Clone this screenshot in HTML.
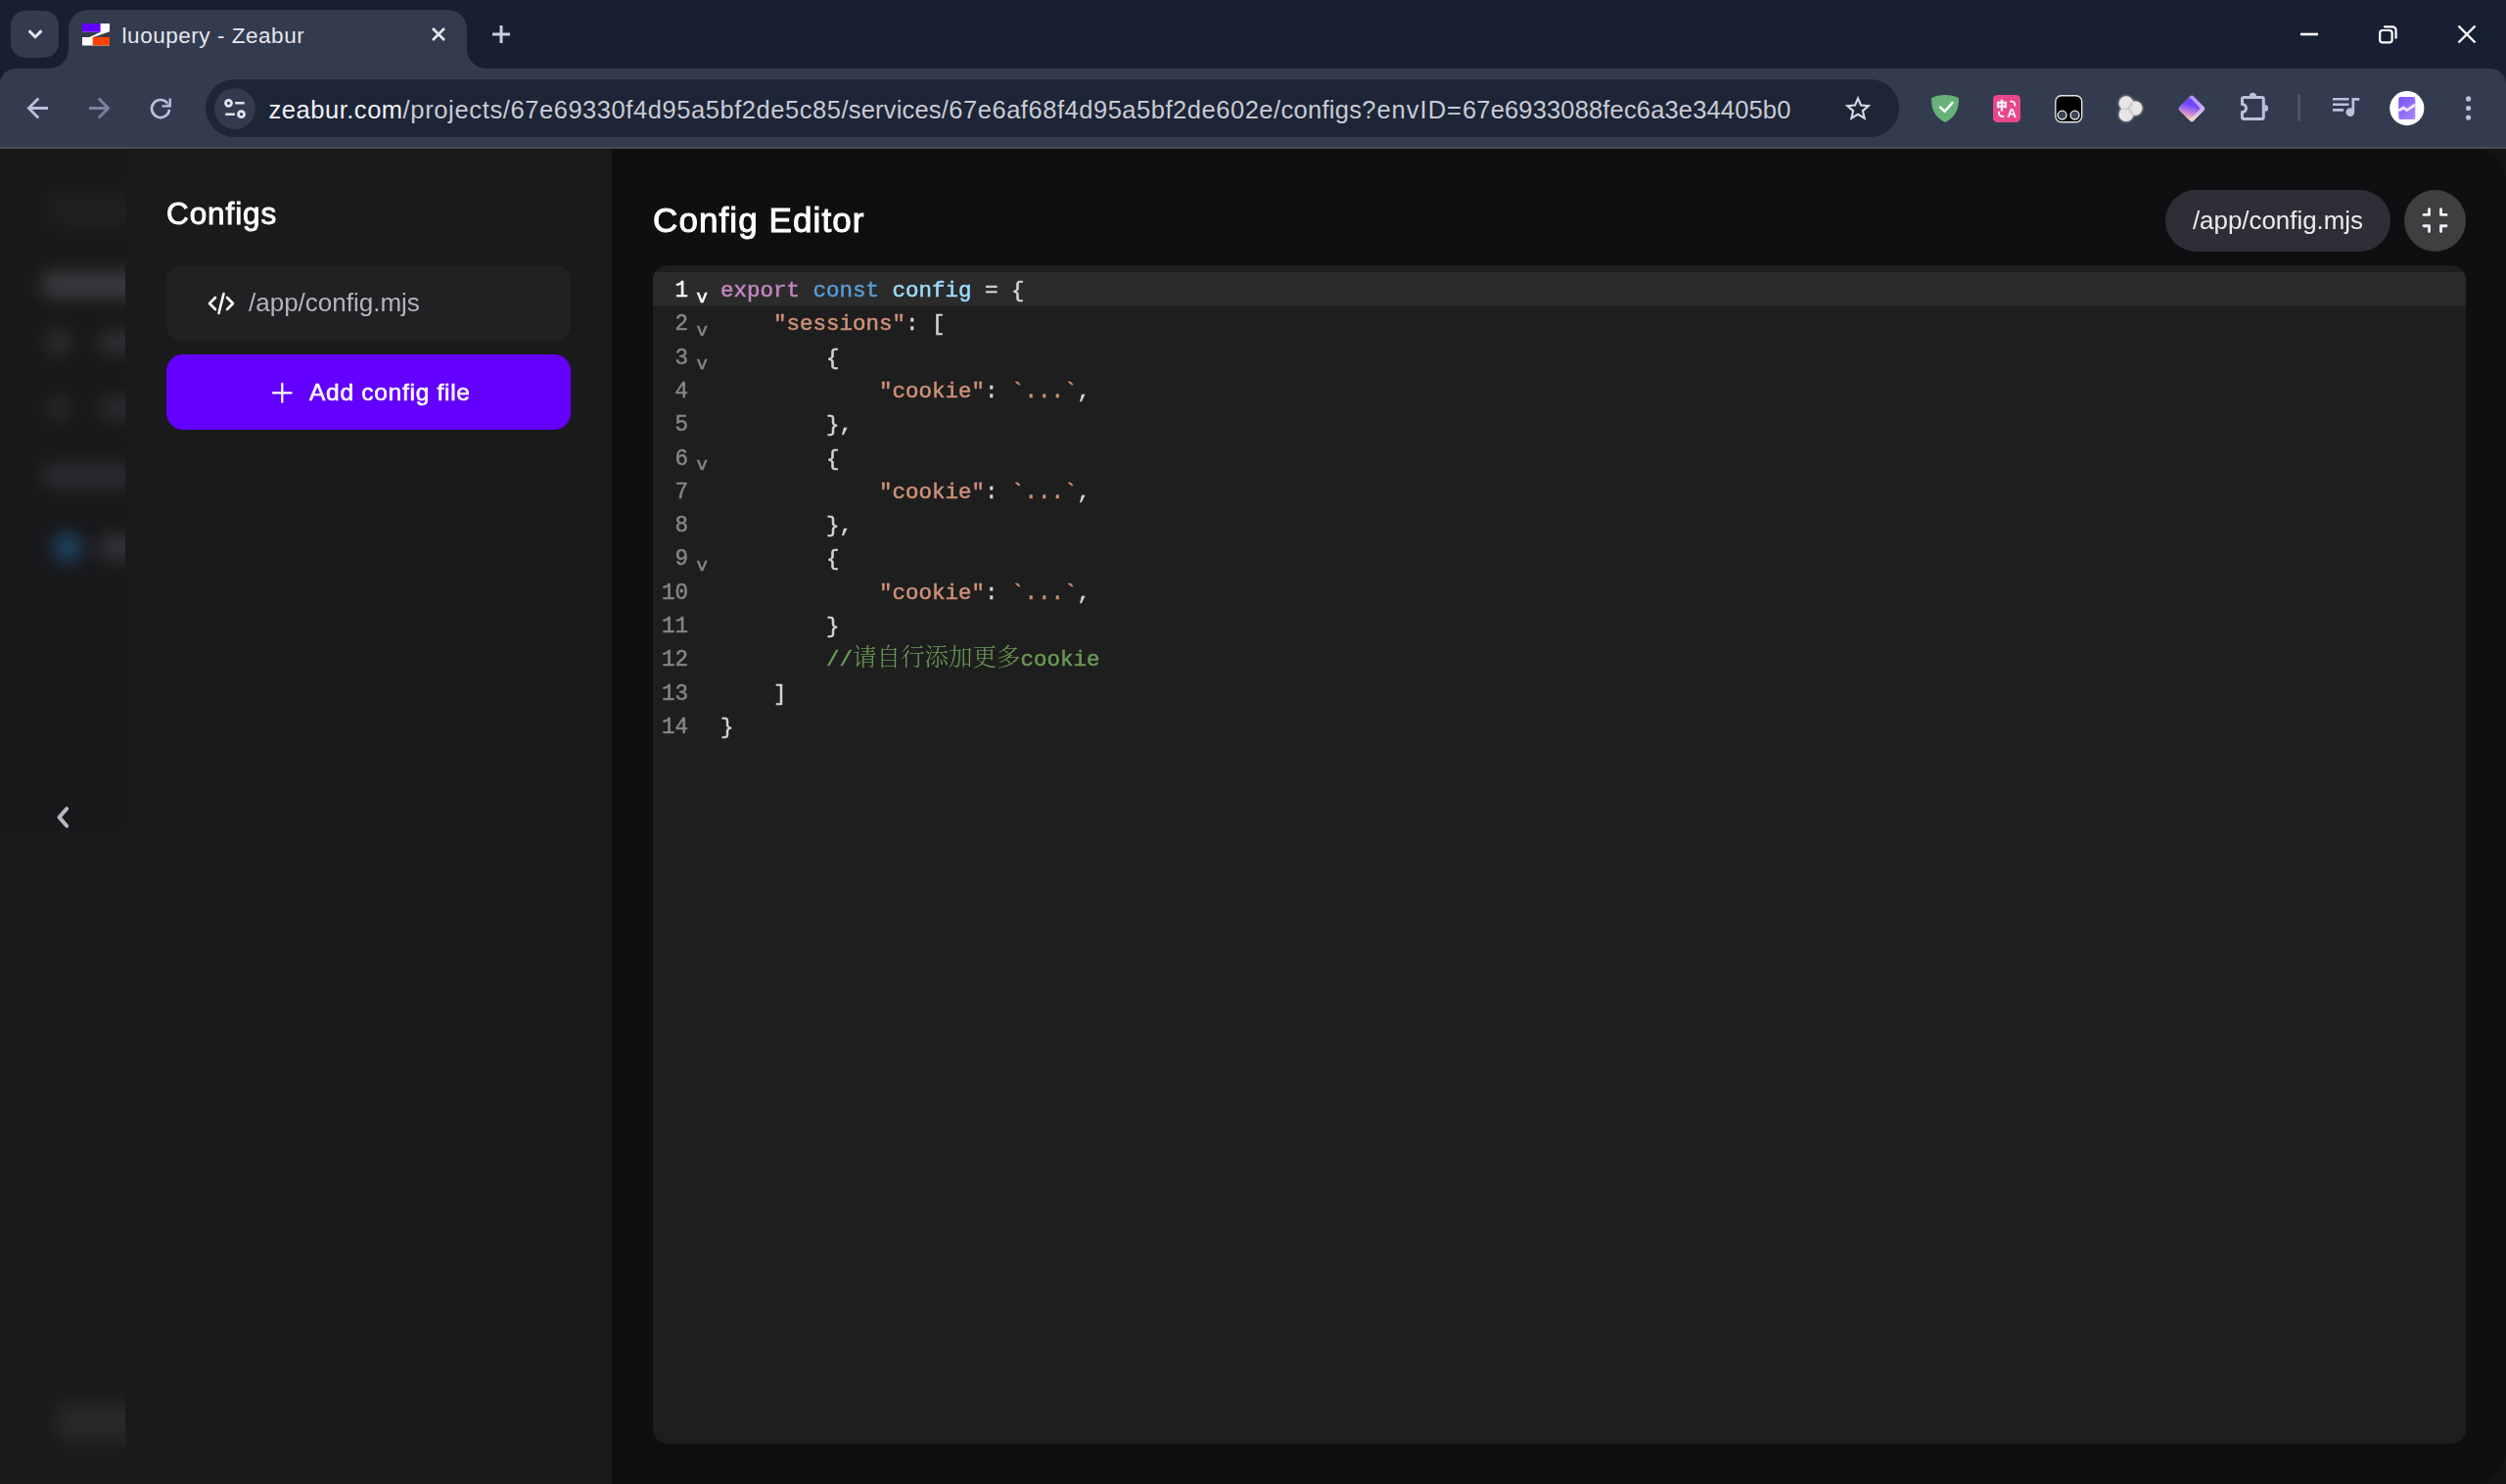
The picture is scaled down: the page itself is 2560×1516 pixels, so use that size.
<!DOCTYPE html>
<html lang="en">
<head>
<meta charset="utf-8">
<title>luoupery - Zeabur</title>
<style>
*{box-sizing:border-box;margin:0;padding:0}
html,body{width:2560px;height:1516px;overflow:hidden;background:#131315;}
body{position:relative;font-family:"Liberation Sans",sans-serif;color:#fff;-webkit-font-smoothing:antialiased}
.abs{position:absolute}
svg{display:block;overflow:visible}

/* ---------- browser chrome ---------- */
#tabstrip{position:absolute;left:0;top:0;width:2560px;height:152px;background:#172032}
#tabsearch{position:absolute;left:11px;top:11px;width:49px;height:48px;border-radius:15px;background:#333c4e}
#tab{position:absolute;left:70px;top:10px;width:406.5px;height:62px;background:#333c4e;border-radius:20px 20px 0 0}
#tab:before,#tab:after{content:"";position:absolute;bottom:2px;width:20px;height:20px}
#tab:before{left:-20px;background:radial-gradient(circle at 0 0,rgba(0,0,0,0) 19.5px,#333c4e 20.5px)}
#tab:after{right:-20px;background:radial-gradient(circle at 100% 0,rgba(0,0,0,0) 19.5px,#333c4e 20.5px)}
#tabtitle{position:absolute;left:124.6px;top:22px;font-size:22.5px;line-height:30px;color:#e4e6ee;white-space:nowrap;letter-spacing:0.53px}
#toolbar{position:absolute;left:0;top:70px;width:2560px;height:81px;background:#333c4e;border-radius:16px 16px 0 0}
#tbline{position:absolute;left:0;top:150px;width:2560px;height:2px;background:#474b55}
#urlbox{position:absolute;left:210px;top:81px;width:1730px;height:59px;border-radius:30px;background:#1d2537}
#siteinfo{position:absolute;left:219px;top:90px;width:42px;height:42px;border-radius:21px;background:#333c4e}
#url{position:absolute;left:274px;top:92.5px;width:1600px;height:38px;font-size:25.5px;line-height:38px;color:#c9cbd3;white-space:nowrap}
#url span{position:absolute;top:0}#url .dom{color:#f1f2f6}

/* ---------- page ---------- */
#page{position:absolute;left:0;top:152px;width:2560px;height:1364px;background:#131315;overflow:hidden}
#rail{position:absolute;left:0;top:0;width:128px;height:1364px;background:#1a1a1c;overflow:hidden}
#railblur{position:absolute;left:-40px;top:-40px;width:248px;height:1444px;background:linear-gradient(#18181a,#18181a) 0 0/248px 741px no-repeat,#1a1a1c;filter:blur(9px)}
.bl{position:absolute}
#panel{position:absolute;left:128px;top:0;width:497px;height:1364px;background:#1a1a1c}
#main{position:absolute;left:625px;top:0;width:1935px;height:1364px;background:#0f0f11;border-radius:0 34px 34px 0}

#h-configs,#h-editor,#cfgitem .t,#addbtn .t,#chip .t{will-change:transform}
/* rail */
#chev{position:absolute;left:53px;top:670px}
/* panel */
#h-configs{position:absolute;left:170px;top:46px;font-size:31.5px;line-height:40px;font-weight:400;-webkit-text-stroke:0.9px #fff;letter-spacing:0.9px;color:#fff;white-space:nowrap}
#cfgitem{position:absolute;left:170px;top:119px;width:413px;height:77px;border-radius:15px;background:#212123}
#cfgitem .ic{position:absolute;left:42px;top:26px}
#cfgitem .t{position:absolute;left:84px;top:21px;font-size:26px;line-height:34px;color:#b4b4bc;white-space:nowrap}
#addbtn{position:absolute;left:170px;top:210px;width:413px;height:77px;border-radius:17px;background:#6300ff}
#addbtn .ic{position:absolute;left:108px;top:29px}
#addbtn .t{position:absolute;left:146px;top:22px;font-size:24.5px;line-height:34px;font-weight:400;-webkit-text-stroke:0.6px #fff;letter-spacing:0.72px;color:#fff;white-space:nowrap}
/* main */
#h-editor{position:absolute;left:667px;top:51px;font-size:35px;line-height:44px;font-weight:400;-webkit-text-stroke:1px #fff;letter-spacing:1.1px;color:#fff;white-space:nowrap}
#chip{position:absolute;left:2212px;top:42px;width:230px;height:63px;border-radius:32px;background:#2f2e37}
#chip .t{position:absolute;left:0;top:14px;width:230px;text-align:center;font-size:25.9px;line-height:34px;color:#ececf0;white-space:nowrap}
#shrink{position:absolute;left:2456px;top:42px;width:63px;height:63px;border-radius:32px;background:#3f3f41}
#editor{position:absolute;left:667px;top:119px;width:1852px;height:1204px;border-radius:15px;background:#1e1e1e;overflow:hidden}
#activeline{position:absolute;left:0;top:7px;width:1852px;height:34.3px;background:#2b2b2b}
#code{position:absolute;left:0;top:8.9px;will-change:transform;-webkit-text-stroke-width:0.5px;width:1852px;font-family:"Liberation Mono","Noto Serif CJK SC",monospace;font-size:22.5px;line-height:34.3px;color:#d4d4d4;white-space:pre}
.ln{position:absolute;left:0;width:36px;text-align:right;color:#858585;transform:translateY(0.6px) scaleY(1.08);transform-origin:50% 72%}
.ln.act{color:#fff}.fold.act{color:#fff}
.fold{position:absolute;left:44.5px;color:#858585;font-size:19px;margin-top:1.8px;-webkit-text-stroke-width:0.6px}
.cl{position:absolute;left:69px}
.zh{font-size:24.5px;font-weight:300;-webkit-text-stroke-width:0;line-height:30px}.k1{color:#c586c0}.k2{color:#569cd6}.v{color:#9cdcfe}.s{color:#ce9178}.c{color:#6a9955}
</style>
</head>
<body>

<div id="tabstrip">
  <div id="tabsearch"></div>
  <div id="tab"></div>
  <div id="tabtitle">luoupery - Zeabur</div>
  <div id="toolbar"></div>
  <div id="urlbox"></div>
  <div id="siteinfo"></div>
  <div id="url"><span class="dom" style="left:0.6px;letter-spacing:0.517px">zeabur.com</span><span style="left:137.6px;letter-spacing:0.647px">/projects</span><span style="left:239.8px;letter-spacing:0.555px">/67e69330f4d95a5bf2de5c85</span><span style="left:585.5px;letter-spacing:0.177px">/services</span><span style="left:687.7px;letter-spacing:0.529px">/67e6af68f4d95a5bf2de602e</span><span style="left:1027.1px;letter-spacing:0.276px">/configs</span><span style="left:1117.2px;letter-spacing:1.016px">?envID=</span><span style="left:1220.0px;letter-spacing:0.152px">67e6933088fec6a3e34405b0</span></div>

  <!-- tab search chevron -->
  <svg class="abs" style="left:27px;top:27px" width="18" height="16" viewBox="0 0 18 16"><path d="M2.6 4.4 L9 10.8 L15.4 4.4" fill="none" stroke="#e1e3ec" stroke-width="2.9" stroke-linecap="butt" stroke-linejoin="miter"/></svg>
  <!-- favicon -->
  <svg class="abs" style="left:84px;top:23.7px" width="28" height="22.4" viewBox="0 0 28 22.4">
    <path d="M0 0 H28 V8.3 L11.5 14 H28 V22.4 H0 V13.9 H7.4 L18.6 8.7 H0 Z" fill="#fff"/>
    <rect x="0" y="0" width="18.6" height="8.7" fill="#6300ff"/>
    <rect x="10.7" y="13.9" width="17.3" height="8.5" fill="#ff4400"/>
  </svg>
  <!-- tab close -->
  <svg class="abs" style="left:441px;top:28px" width="14" height="14" viewBox="0 0 14 14"><path d="M1 1 L13 13 M13 1 L1 13" fill="none" stroke="#e4e6ee" stroke-width="2.6"/></svg>
  <!-- new tab -->
  <svg class="abs" style="left:503px;top:26px" width="18" height="18" viewBox="0 0 18 18"><path d="M9 0 V18 M0 9 H18" fill="none" stroke="#c9cde2" stroke-width="3"/></svg>
  <!-- window controls -->
  <svg class="abs" style="left:2350px;top:33px" width="18" height="4" viewBox="0 0 18 4"><path d="M0 2 H18" stroke="#fff" stroke-width="2.6"/></svg>
  <svg class="abs" style="left:2430px;top:26px" width="19" height="19" viewBox="0 0 19 19"><rect x="1.2" y="5" width="12.4" height="12.4" rx="2.6" fill="none" stroke="#fff" stroke-width="2.2"/><path d="M5.2 1.3 H14 A3.6 3.6 0 0 1 17.6 4.9 V13.6" fill="none" stroke="#fff" stroke-width="2.2"/></svg>
  <svg class="abs" style="left:2511px;top:26px" width="18" height="18" viewBox="0 0 18 18"><path d="M0.5 0.5 L17.5 17.5 M17.5 0.5 L0.5 17.5" fill="none" stroke="#fff" stroke-width="2.4"/></svg>

  <!-- nav -->
  <svg class="abs" style="left:27px;top:99px" width="24" height="23" viewBox="0 0 24 23"><path d="M22 11.5 H2.5 M12.3 1.6 L2.4 11.5 L12.3 21.4" fill="none" stroke="#b9c1dd" stroke-width="2.8" stroke-linejoin="miter"/></svg>
  <svg class="abs" style="left:89px;top:99px" width="24" height="23" viewBox="0 0 24 23"><path d="M2 11.5 H21.5 M11.7 1.6 L21.6 11.5 L11.7 21.4" fill="none" stroke="#7b839a" stroke-width="2.8" stroke-linejoin="miter"/></svg>
  <svg class="abs" style="left:152.4px;top:98.6px" width="24" height="24" viewBox="0 0 24 24"><path d="M20.97 12.78 A9 9 0 1 1 19.2 6.6" fill="none" stroke="#b9c1dd" stroke-width="2.7"/><path d="M21.75 1.4 V9.35 H13.5" fill="none" stroke="#b9c1dd" stroke-width="2.3"/><path d="M21.75 9.35 V5.2 L17.2 9.35 Z" fill="#b9c1dd" fill-opacity=".75"/></svg>
  <!-- site info -->
  <svg class="abs" style="left:227px;top:98px" width="26" height="26" viewBox="0 0 26 26"><circle cx="6.5" cy="7.3" r="3.0" fill="none" stroke="#e1e3ec" stroke-width="2.8"/><path d="M13.1 7.2 H22.7 M3.2 18.8 H12.9" stroke="#e1e3ec" stroke-width="2.5" fill="none"/><circle cx="19.5" cy="18.7" r="3.0" fill="none" stroke="#e1e3ec" stroke-width="2.8"/></svg>
  <!-- star -->
  <svg class="abs" style="left:1882px;top:95px" width="32" height="32" viewBox="0 0 24 24"><path fill="#d5d7e0" d="M22 9.24l-7.19-.62L12 2 9.19 8.63 2 9.24l5.46 4.73L5.82 21 12 17.27 18.18 21l-1.63-7.03L22 9.24zM12 15.4l-3.76 2.27 1-4.28-3.32-2.88 4.38-.38L12 6.1l1.71 4.04 4.38.38-3.32 2.88 1 4.28L12 15.4z"/></svg>
  <!-- adguard -->
  <svg class="abs" style="left:1973px;top:97px" width="28" height="28" viewBox="0 0 28 28"><path d="M14 0 C9 0 4 1.2 0 3.2 C0 12 1.5 21.5 14 28 C26.5 21.5 28 12 28 3.2 C24 1.2 19 0 14 0 Z" fill="#67b279"/><path d="M8.3 11.9 L13.6 16.7 L22.2 7.1" fill="none" stroke="#fff" stroke-width="2.4"/></svg>
  <!-- translate -->
  <div class="abs" style="left:2036px;top:97px;width:28px;height:28px;border-radius:4.5px;background:#e9478b"></div>
  <div class="abs" style="left:2039.6px;top:101px;font-family:'Liberation Sans','Noto Sans CJK SC',sans-serif;font-size:11px;line-height:14px;font-weight:700;-webkit-text-stroke:0.5px #fff;color:#fff">中</div>
  <div class="abs" style="left:2050.2px;top:108.6px;font-size:13.5px;line-height:14px;font-weight:700;color:#fff">A</div>
  <svg class="abs" style="left:2036px;top:97px" width="28" height="28" viewBox="0 0 28 28"><path d="M17.2 6.6 H19 A3.4 3.4 0 0 1 22.4 10 V11.6" fill="none" stroke="#fff" stroke-width="1.8"/><path d="M11.2 21.8 H9.4 A3.4 3.4 0 0 1 6 18.4 V16.8" fill="none" stroke="#fff" stroke-width="1.8"/></svg>
  <!-- tampermonkey -->
  <svg class="abs" style="left:2098.8px;top:96.5px" width="28.5" height="28.5" viewBox="0 0 29 29"><rect x="0.8" y="0.8" width="27.4" height="27.4" rx="6" fill="#000" stroke="#e6e6e6" stroke-width="1.4"/><circle cx="7.7" cy="20.9" r="4.5" fill="#3a4256" stroke="#ececec" stroke-width="1.4"/><circle cx="20.9" cy="20.9" r="4.5" fill="#3a4256" stroke="#ececec" stroke-width="1.4"/></svg>
  <!-- circles -->
  <svg class="abs" style="left:2160px;top:95px;filter:drop-shadow(0 0 1.6px rgba(255,246,225,.85))" width="32" height="32" viewBox="0 0 32 32"><g style="isolation:isolate"><circle cx="11.9" cy="10.5" r="7.2" fill="#e6e6e6" style="mix-blend-mode:multiply"/><circle cx="21.2" cy="15.6" r="7.2" fill="#e6e6e6" style="mix-blend-mode:multiply"/><circle cx="11.9" cy="21.9" r="7.2" fill="#e6e6e6" style="mix-blend-mode:multiply"/></g></svg>
  <!-- diamond -->
  <svg class="abs" style="left:2224px;top:96px" width="30" height="30" viewBox="0 0 30 30"><defs><linearGradient id="dg" gradientUnits="userSpaceOnUse" x1="16" y1="5" x2="10" y2="27"><stop offset="0" stop-color="#6a45ff"/><stop offset=".3" stop-color="#7448fb"/><stop offset=".65" stop-color="#c787d6"/><stop offset="1" stop-color="#ffd0a4"/></linearGradient><linearGradient id="dg2" gradientUnits="userSpaceOnUse" x1="17" y1="1" x2="14" y2="29"><stop offset="0" stop-color="#a88dff"/><stop offset=".45" stop-color="#c9aef6"/><stop offset="1" stop-color="#ffdccf"/></linearGradient></defs><path d="M15.1 4.1 L25.9 14.9 L15.1 25.7 L4.3 14.9 Z" fill="url(#dg2)" stroke="url(#dg2)" stroke-width="5" stroke-linejoin="round"/><path d="M12.45 6.03 L21.32 14.9 L12.45 23.77 L3.58 14.9 Z" fill="url(#dg)" stroke="url(#dg)" stroke-width="4" stroke-linejoin="round"/></svg>
  <!-- puzzle -->
  <svg class="abs" style="left:2289px;top:95px" width="29" height="28" viewBox="0 0 29 28"><path d="M1.5 11.5 V5.9 A1.5 1.5 0 0 1 3 4.4 H21.8 A1.5 1.5 0 0 1 23.3 5.9 V24.9 A1.5 1.5 0 0 1 21.8 26.4 H3 A1.5 1.5 0 0 1 1.5 24.9 V19.5 A4 4 0 0 0 1.5 11.5 Z" fill="none" stroke="#b9c1dd" stroke-width="3" stroke-linejoin="round"/><path d="M8.8 3.4 A3.6 3.6 0 0 1 16 3.4 Z M24.5 11.9 A3.6 3.6 0 0 1 24.5 19.1 Z" fill="#b9c1dd"/></svg>
  <div class="abs" style="left:2347px;top:96px;width:3px;height:28px;border-radius:2px;background:#4d5468"></div>
  <!-- media -->
  <svg class="abs" style="left:2383px;top:99px" width="28" height="21" viewBox="0 0 28 21"><path d="M0 2.2 H16.5 M0 7.8 H16.5 M0 13.4 H11" stroke="#b9c1dd" stroke-width="2.6" fill="none"/><path d="M19.5 1 H27.3 V3.8 H22.2 V15.6 A4.4 4.4 0 1 1 19.5 11.6 Z" fill="#b9c1dd"/></svg>
  <!-- avatar -->
  <svg class="abs" style="left:2441px;top:93px" width="36" height="36" viewBox="0 0 36 36"><defs><linearGradient id="ag" x1="0" y1="0" x2="1" y2="1"><stop offset="0" stop-color="#7a4dff"/><stop offset="1" stop-color="#a98bfa"/></linearGradient></defs><circle cx="17.8" cy="17.6" r="17.6" fill="#fff"/><rect x="9.3" y="6" width="17" height="23" rx="2" fill="url(#ag)"/><path d="M9.3 20.2 L14.3 17 L17.6 19.6 L26.3 14" fill="none" stroke="#f0e8ff" stroke-width="2.7"/></svg>
  <!-- dots -->
  <svg class="abs" style="left:2518px;top:97px" width="8" height="28" viewBox="0 0 8 28"><circle cx="3.6" cy="3.9" r="2.6" fill="#b9c1dd"/><circle cx="3.6" cy="13.5" r="2.6" fill="#b9c1dd"/><circle cx="3.6" cy="23.1" r="2.6" fill="#b9c1dd"/></svg>
  <div id="tbline"></div>
</div>

<div id="page">
  <div id="rail">
    <div id="railblur">
      <div class="bl" style="left:88px;top:84px;width:100px;height:36px;border-radius:12px;background:#202023"></div>
      <div class="bl" style="left:82px;top:165px;width:110px;height:28px;border-radius:12px;background:#3a3a3e"></div>
      <div class="bl" style="left:87px;top:225px;width:26px;height:26px;border-radius:13px;background:#303034"></div>
      <div class="bl" style="left:140px;top:226px;width:50px;height:24px;border-radius:12px;background:#303034"></div>
      <div class="bl" style="left:87px;top:292px;width:26px;height:26px;border-radius:13px;background:#29292c"></div>
      <div class="bl" style="left:140px;top:293px;width:50px;height:24px;border-radius:12px;background:#2c2c30"></div>
      <div class="bl" style="left:82px;top:361px;width:110px;height:26px;border-radius:12px;background:#2b2b2f"></div>
      <div class="bl" style="left:94px;top:432px;width:30px;height:30px;border-radius:15px;background:#1f4564"></div>
      <div class="bl" style="left:140px;top:434px;width:50px;height:26px;border-radius:12px;background:#333338"></div>
      <div class="bl" style="left:98px;top:1322px;width:90px;height:38px;border-radius:12px;background:#29292c"></div>
    </div>
    <svg id="chev" width="20" height="26" viewBox="0 0 20 26"><path d="M15.2 4.2 L7.5 12.9 L15.2 21.8" fill="none" stroke="#b6b6be" stroke-width="4" stroke-linecap="round" stroke-linejoin="round"/></svg>
  </div>
  <div id="panel"></div>
  <div id="main"></div>
  <div id="h-configs">Configs</div>
  <div id="cfgitem">
    <svg class="ic" width="28" height="26" viewBox="0 0 28 26"><path d="M8 7 L2 13 L8 19 M20 7 L26 13 L20 19 M16.5 3 L11.5 23" fill="none" stroke="#fff" stroke-width="2.6" stroke-linecap="round" stroke-linejoin="round"/></svg>
    <div class="t">/app/config.mjs</div>
  </div>
  <div id="addbtn">
    <svg class="ic" width="20.6" height="20.6" viewBox="0 0 22 22"><path d="M11 1 V21 M1 11 H21" fill="none" stroke="#fff" stroke-width="2.4" stroke-linecap="round"/></svg>
    <div class="t">Add config file</div>
  </div>
  <div id="h-editor">Config Editor</div>
  <div id="chip"><div class="t">/app/config.mjs</div></div>
  <div id="shrink">
    <svg style="position:absolute;left:18px;top:18px" width="27" height="27" viewBox="0 0 27 27"><path d="M2 7.4 H7.5 V1.8 M19.5 1.8 V7.4 H25 M25 18.75 H19.5 V24.5 M7.5 24.5 V18.75 H2" fill="none" stroke="#ececf0" stroke-width="2.9" stroke-linecap="round" stroke-linejoin="round"/></svg>
  </div>
  <div id="editor">
    <div id="activeline"></div>
    <div id="code">
      <div class="ln act" style="top:0.0px">1</div>
      <div class="fold act" style="top:5.0px">v</div>
      <div class="cl" style="top:0.0px"><span class="k1">export</span> <span class="k2">const</span> <span class="v">config</span> = {</div>
      <div class="ln" style="top:34.3px">2</div>
      <div class="fold" style="top:39.3px">v</div>
      <div class="cl" style="top:34.3px">    <span class="s">"sessions"</span>: [</div>
      <div class="ln" style="top:68.6px">3</div>
      <div class="fold" style="top:73.6px">v</div>
      <div class="cl" style="top:68.6px">        {</div>
      <div class="ln" style="top:102.9px">4</div>
      <div class="cl" style="top:102.9px">            <span class="s">"cookie"</span>: <span class="s">`...`</span>,</div>
      <div class="ln" style="top:137.2px">5</div>
      <div class="cl" style="top:137.2px">        },</div>
      <div class="ln" style="top:171.5px">6</div>
      <div class="fold" style="top:176.5px">v</div>
      <div class="cl" style="top:171.5px">        {</div>
      <div class="ln" style="top:205.8px">7</div>
      <div class="cl" style="top:205.8px">            <span class="s">"cookie"</span>: <span class="s">`...`</span>,</div>
      <div class="ln" style="top:240.1px">8</div>
      <div class="cl" style="top:240.1px">        },</div>
      <div class="ln" style="top:274.4px">9</div>
      <div class="fold" style="top:279.4px">v</div>
      <div class="cl" style="top:274.4px">        {</div>
      <div class="ln" style="top:308.7px">10</div>
      <div class="cl" style="top:308.7px">            <span class="s">"cookie"</span>: <span class="s">`...`</span>,</div>
      <div class="ln" style="top:343.0px">11</div>
      <div class="cl" style="top:343.0px">        }</div>
      <div class="ln" style="top:377.3px">12</div>
      <div class="cl" style="top:377.3px">        <span class="c">//<span class="zh">请自行添加更多</span>cookie</span></div>
      <div class="ln" style="top:411.6px">13</div>
      <div class="cl" style="top:411.6px">    ]</div>
      <div class="ln" style="top:445.9px">14</div>
      <div class="cl" style="top:445.9px">}</div>
    </div>
  </div>
</div>

</body>
</html>
